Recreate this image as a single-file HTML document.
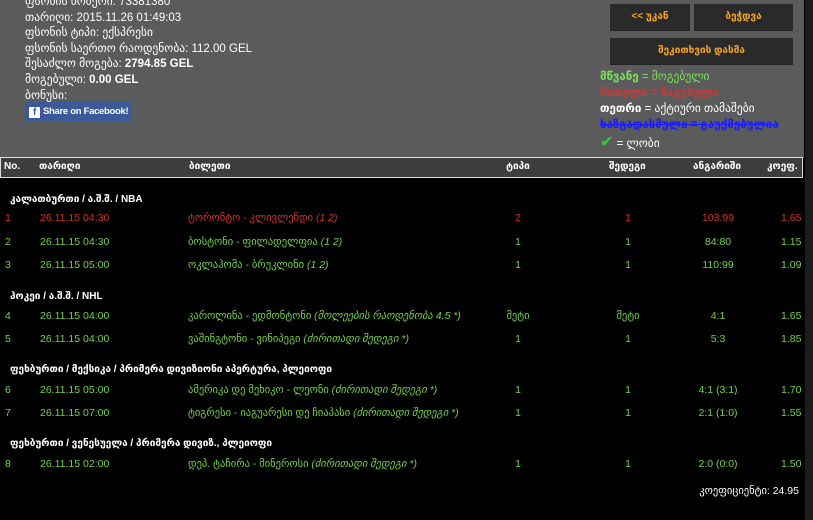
<!DOCTYPE html>
<html><head><meta charset="utf-8"><style>
body{margin:0;width:813px;height:520px;overflow:hidden;background:#000;font-family:"Liberation Sans","DejaVu Sans",sans-serif;position:relative}
.top{position:absolute;left:0;top:0;width:804px;height:158px;background:#5b5b5b}
.info{position:absolute;left:25px;top:-5px;color:#fff;font-size:11.5px;line-height:15.6px}
.fb{position:absolute;left:25px;top:102px;width:106px;height:19px;background:#3b5998;color:#fff;font-size:9.5px;letter-spacing:-0.3px;font-weight:bold;line-height:19px;white-space:nowrap;overflow:hidden}
.fb i{display:inline-block;width:11px;height:11px;background:#fff;color:#3b5998;font-style:normal;font-size:10px;line-height:12px;text-align:center;margin:0 3px 0 4px;vertical-align:-1px}
.btn{position:absolute;background:#2a2a2a;color:#f5a623;font-size:10px;font-weight:bold;text-align:center;line-height:26px;height:26px;border-bottom:1px solid #222}
.leg{position:absolute;left:600px;font-size:11.5px;font-weight:bold;white-space:nowrap}
.hdr{position:absolute;left:0;top:157px;width:801px;height:19px;border:1px solid #ddd;background:#3d3d3d;color:#fff;font-size:10px;font-weight:bold}
.hdr span,.r span{position:absolute;top:3px;white-space:nowrap}
.r{position:absolute;left:0;width:805px;height:16px;font-size:10.5px;color:#6fd542}
.r span{top:0}
.red{color:#d2312c}
.cat{position:absolute;left:10px;color:#fff;font-size:10px;font-weight:bold}
.c{text-align:center;width:60px;margin-left:-30px}
em{font-style:italic}
.side{position:absolute;left:805px;top:0;width:8px;height:520px;background:#1c1c1c}
</style></head><body>
<div class="top"></div>
<div class="info">ფსონის ნომერი: 73381380<br>თარიღი: 2015.11.26 01:49:03<br>ფსონის ტიპი: ექსპრესი<br>ფსონის საერთო რაოდენობა: 112.00 GEL<br>შესაძლო მოგება: <b>2794.85 GEL</b><br>მოგებული: <b>0.00 GEL</b><br>ბონუსი:</div>
<div class="fb"><i>f</i>Share on Facebook!</div>
<div class="btn" style="left:610px;top:4px;width:80px">&lt;&lt; უკან</div>
<div class="btn" style="left:694px;top:4px;width:99px">ბეჭდვა</div>
<div class="btn" style="left:610px;top:38px;width:183px">შეკითხვის დასმა</div>
<div class="leg" style="top:69px;color:#7be05a">მწვანე <span style="font-weight:normal">= მოგებული</span></div>
<div class="leg" style="top:85px;color:#c83a3a">წითელი = წაგებული</div>
<div class="leg" style="top:101px;color:#fff">თეთრი <span style="font-weight:normal">= აქტიური თამაშები</span></div>
<div class="leg" style="top:117px;color:#1a1aff;text-decoration:line-through">ხაზგადასმული = გაუქმებულია</div>
<div class="leg" style="top:132px;color:#fff;font-weight:normal"><span style="color:#3c3;font-size:16px;font-weight:bold">✔</span> = ლობი</div>
<div class="hdr"><span style="left:3px">No.</span><span style="left:38px">თარიღი</span><span style="left:188px">ბილეთი</span><span style="left:505px">ტიპი</span><span style="left:608px">შედეგი</span><span style="left:692px">ანგარიში</span><span style="left:766px">კოეფ.</span></div>
<div class="cat" style="top:194px">კალათბურთი / ა.შ.შ. / NBA</div>
<div class="r red" style="top:212px"><span style="left:5px">1</span><span style="left:40px">26.11.15 04:30</span><span style="left:188px">ტორონტო - კლივლენდი <em>(1 2)</em></span><span class="c" style="left:518px">2</span><span class="c" style="left:628px">1</span><span class="c" style="left:718px">103:99</span><span style="left:781px">1.65</span></div>
<div class="r" style="top:236px"><span style="left:5px">2</span><span style="left:40px">26.11.15 04:30</span><span style="left:188px">ბოსტონი - ფილადელფია <em>(1 2)</em></span><span class="c" style="left:518px">1</span><span class="c" style="left:628px">1</span><span class="c" style="left:718px">84:80</span><span style="left:781px">1.15</span></div>
<div class="r" style="top:259px"><span style="left:5px">3</span><span style="left:40px">26.11.15 05:00</span><span style="left:188px">ოკლაჰომა - ბრუკლინი <em>(1 2)</em></span><span class="c" style="left:518px">1</span><span class="c" style="left:628px">1</span><span class="c" style="left:718px">110:99</span><span style="left:781px">1.09</span></div>
<div class="cat" style="top:291px">ჰოკეი / ა.შ.შ. / NHL</div>
<div class="r" style="top:310px"><span style="left:5px">4</span><span style="left:40px">26.11.15 04:00</span><span style="left:188px">კაროლინა - ედმონტონი <em>(მოლეების რაოდენობა 4.5 *)</em></span><span class="c" style="left:518px">მეტი</span><span class="c" style="left:628px">მეტი</span><span class="c" style="left:718px">4:1</span><span style="left:781px">1.65</span></div>
<div class="r" style="top:333px"><span style="left:5px">5</span><span style="left:40px">26.11.15 04:00</span><span style="left:188px">ვაშინგტონი - ვინიპეგი <em>(ძირითადი შედეგი *)</em></span><span class="c" style="left:518px">1</span><span class="c" style="left:628px">1</span><span class="c" style="left:718px">5:3</span><span style="left:781px">1.85</span></div>
<div class="cat" style="top:364px">ფეხბურთი / მექსიკა / პრიმერა დივიზიონი აპერტურა, პლეიოფი</div>
<div class="r" style="top:384px"><span style="left:5px">6</span><span style="left:40px">26.11.15 05:00</span><span style="left:188px">ამერიკა დე მეხიკო - ლეონი <em>(ძირითადი შედეგი *)</em></span><span class="c" style="left:518px">1</span><span class="c" style="left:628px">1</span><span class="c" style="left:718px">4:1 (3:1)</span><span style="left:781px">1.70</span></div>
<div class="r" style="top:407px"><span style="left:5px">7</span><span style="left:40px">26.11.15 07:00</span><span style="left:188px">ტიგრესი - იაგუარესი დე ჩიაპასი <em>(ძირითადი შედეგი *)</em></span><span class="c" style="left:518px">1</span><span class="c" style="left:628px">1</span><span class="c" style="left:718px">2:1 (1:0)</span><span style="left:781px">1.55</span></div>
<div class="cat" style="top:438px">ფეხბურთი / ვენესუელა / პრიმერა დივიზ., პლეიოფი</div>
<div class="r" style="top:458px"><span style="left:5px">8</span><span style="left:40px">26.11.15 02:00</span><span style="left:188px">დეპ. ტაჩირა - მინეროსი <em>(ძირითადი შედეგი *)</em></span><span class="c" style="left:518px">1</span><span class="c" style="left:628px">1</span><span class="c" style="left:718px">2:0 (0:0)</span><span style="left:781px">1.50</span></div>
<div class="r" style="top:485px;color:#fff"><span style="right:6px">კოეფიციენტი: 24.95</span></div>
<div class="side"></div>
</body></html>
